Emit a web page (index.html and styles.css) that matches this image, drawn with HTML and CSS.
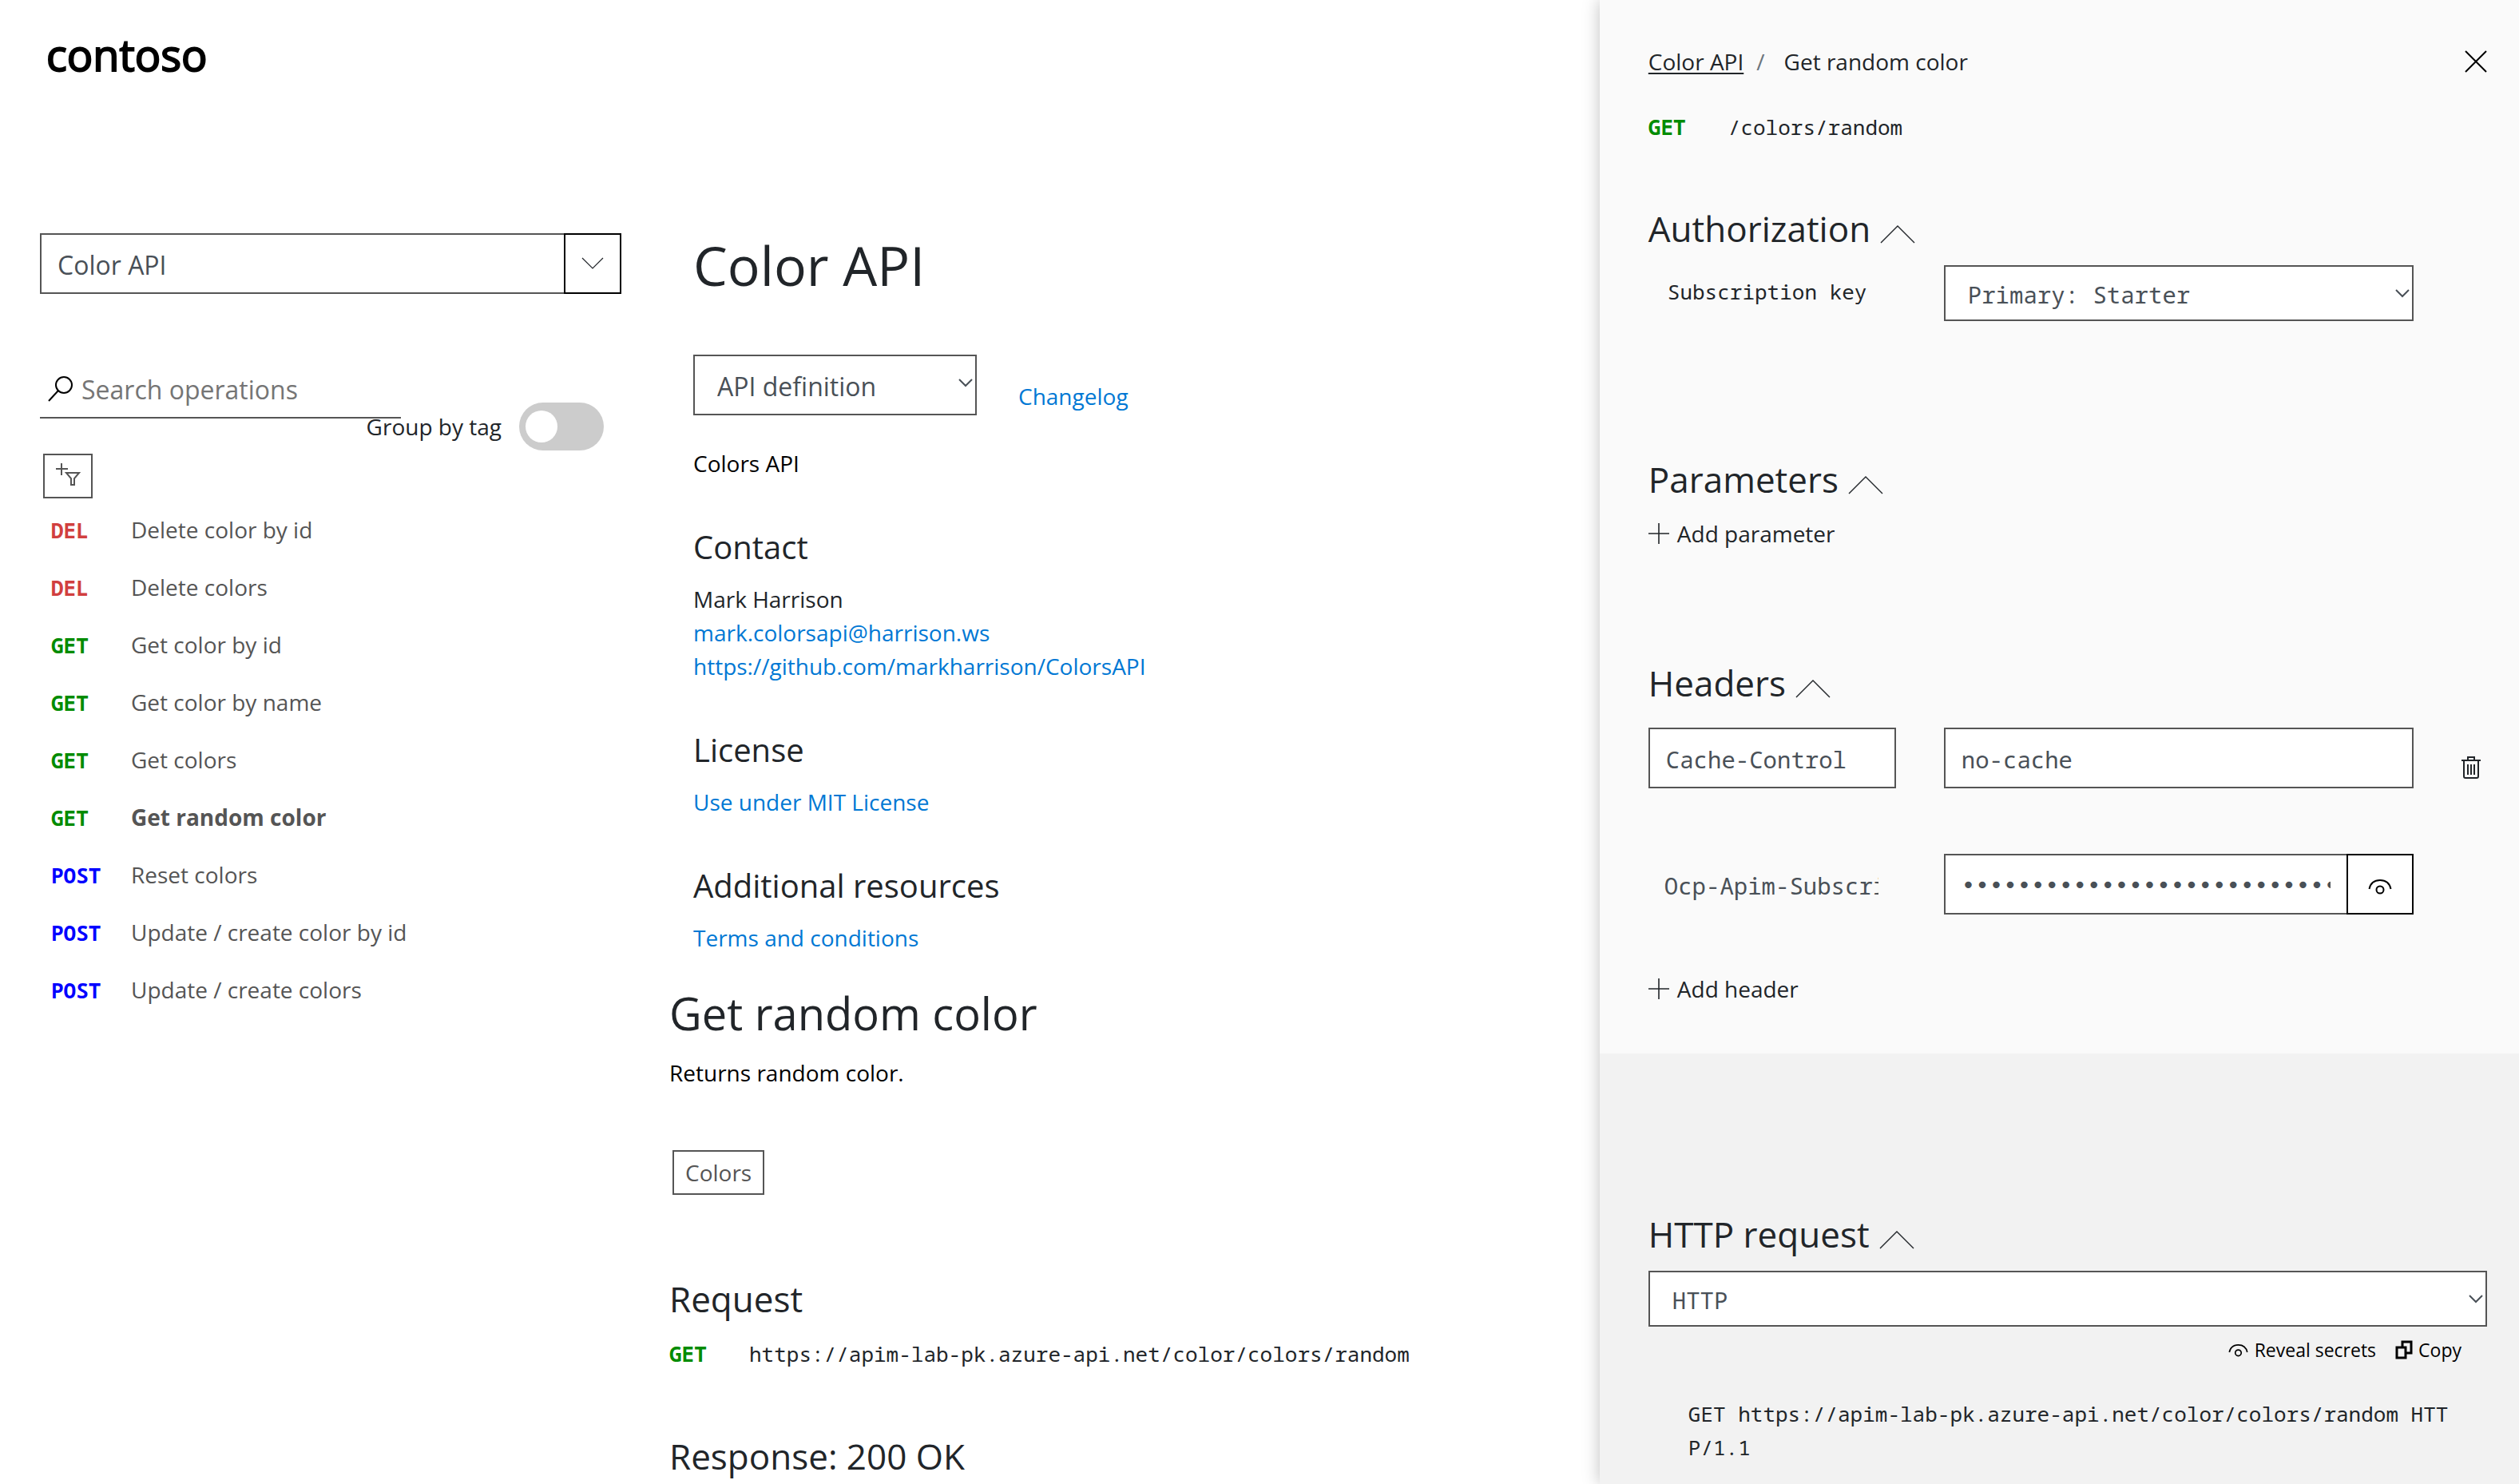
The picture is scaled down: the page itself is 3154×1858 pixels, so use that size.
FILE: index.html
```html
<!DOCTYPE html>
<html lang="en">
<head>
<meta charset="utf-8">
<meta name="viewport" content="width=device-width, initial-scale=1">
<title>Color API - Get random color</title>
<link rel="stylesheet" href="styles.css">
</head>
<body>
<svg class="defs" aria-hidden="true">
  <symbol id="icon-up" viewBox="0 0 44 23"><path d="M1 22 22 1l21 21" fill="none" stroke="currentColor" stroke-width="1.400"/></symbol>
  <symbol id="icon-arrow" viewBox="0 0 18 11"><path d="m1 1 8 8 8-8" fill="none" stroke="currentColor" stroke-width="2"/></symbol>
  <symbol id="icon-plus" viewBox="0 0 26 26"><path d="M13 0v26M0 13h26" fill="none" stroke="currentColor" stroke-width="1.600"/></symbol>
  <symbol id="icon-eye" viewBox="0 0 30 20"><path d="M1.500 13C3 6 8 2 15 2s12 4 13.500 11" fill="none" stroke="currentColor" stroke-width="2"/><circle cx="15" cy="14" r="4.500" fill="none" stroke="currentColor" stroke-width="2"/></symbol>
</svg>
<div class="page">
  <div class="portal">
    <header class="header"><a class="logo" href="#">contoso</a></header>
    <div class="columns">
      <nav class="sidebar" aria-label="Operations">
        <div class="combo">
          <input class="field combo-input" type="text" value="Color API" aria-label="API">
          <button class="combo-button" type="button" aria-label="Show APIs">
            <svg width="28" height="16" viewBox="0 0 28 16"><path d="m1 1 13 13L27 1" fill="none" stroke="#212529" stroke-width="1.200"/></svg>
          </button>
        </div>
        <div class="search">
          <svg width="32" height="32" viewBox="0 0 32 32"><circle cx="20" cy="11" r="10" fill="none" stroke="#000" stroke-width="2"/><path d="M13 18 1 31" stroke="#000" stroke-width="2"/></svg>
          <input class="search-input" type="search" placeholder="Search operations" aria-label="Search operations">
        </div>
        <div class="group">
          <label for="group-by-tag">Group by tag</label>
          <input class="switch" id="group-by-tag" type="checkbox">
        </div>
        <button class="filter" type="button" aria-label="Add tag filter">
          <svg width="32" height="32" viewBox="0 0 32 32" fill="none" stroke="#555" stroke-width="2"><path d="M8 0v15M1 7h15"/><path d="M14 12h16l-6 7v8h-4v-8z"/></svg>
        </button>
        <ul class="operations">
          <li><a href="#"><span class="method del">DEL</span><span>Delete color by id</span></a></li>
          <li><a href="#"><span class="method del">DEL</span><span>Delete colors</span></a></li>
          <li><a href="#"><span class="method get">GET</span><span>Get color by id</span></a></li>
          <li><a href="#"><span class="method get">GET</span><span>Get color by name</span></a></li>
          <li><a href="#"><span class="method get">GET</span><span>Get colors</span></a></li>
          <li><a href="#" aria-current="page"><span class="method get">GET</span><span class="current">Get random color</span></a></li>
          <li><a href="#"><span class="method post">POST</span><span>Reset colors</span></a></li>
          <li><a href="#"><span class="method post">POST</span><span>Update / create color by id</span></a></li>
          <li><a href="#"><span class="method post">POST</span><span>Update / create colors</span></a></li>
        </ul>
      </nav>
      <main class="main">
        <div class="api">
          <h1>Color API</h1>
          <div class="api-tools">
            <div class="select definition">
              <select class="field" aria-label="API definition"><option>API definition</option></select>
              <svg width="18" height="11"><use href="#icon-arrow"/></svg>
            </div>
            <a class="link" href="#">Changelog</a>
          </div>
          <p class="description">Colors API</p>
          <section class="info">
            <h3>Contact</h3>
            <p>Mark Harrison</p>
            <p><a class="link" href="#">mark.colorsapi@harrison.ws</a></p>
            <p><a class="link" href="#">https://github.com/markharrison/ColorsAPI</a></p>
          </section>
          <section class="info">
            <h3>License</h3>
            <p><a class="link" href="#">Use under MIT License</a></p>
          </section>
          <section class="info">
            <h3>Additional resources</h3>
            <p><a class="link" href="#">Terms and conditions</a></p>
          </section>
        </div>
        <section class="operation">
          <h2>Get random color</h2>
          <p class="returns">Returns random color.</p>
          <span class="tag">Colors</span>
          <h4 class="request">Request</h4>
          <p class="endpoint"><span class="method get">GET</span><span>https://apim-lab-pk.azure-api.net/color/colors/random</span></p>
          <h4 class="response">Response: 200 OK</h4>
        </section>
      </main>
    </div>
  </div>
  <aside class="console" aria-label="Try this operation">
    <div class="form">
      <div class="topbar">
        <nav class="breadcrumb" aria-label="Breadcrumb"><a href="#">Color API</a><span class="slash">/</span><span>Get random color</span></nav>
        <button class="plain" type="button" aria-label="Close">
          <svg width="28" height="28" viewBox="0 0 28 28"><path d="m1 1 26 26M27 1 1 27" stroke="#000" stroke-width="2"/></svg>
        </button>
      </div>
      <p class="endpoint path"><span class="method get">GET</span><span>/colors/random</span></p>

      <section class="authorization">
        <h4>Authorization<svg class="up" width="44" height="23"><use href="#icon-up"/></svg></h4>
        <div class="row">
          <label class="row-label" for="key">Subscription key</label>
          <div class="select mono">
            <select class="field" id="key"><option>Primary: Starter</option></select>
            <svg width="18" height="11"><use href="#icon-arrow"/></svg>
          </div>
        </div>
      </section>

      <section class="parameters">
        <h4>Parameters<svg class="up" width="44" height="23"><use href="#icon-up"/></svg></h4>
        <button class="plain add" type="button"><svg width="26" height="26"><use href="#icon-plus"/></svg>Add parameter</button>
      </section>

      <section class="headers">
        <h4>Headers<svg class="up" width="44" height="23"><use href="#icon-up"/></svg></h4>
        <div class="row">
          <input class="field mono" type="text" value="Cache-Control" aria-label="Header name">
          <input class="field mono" type="text" value="no-cache" aria-label="Header value">
          <button class="plain remove" type="button" aria-label="Remove header">
            <svg width="24" height="28" viewBox="0 0 24 28" fill="none" stroke="#212529" stroke-width="2"><path d="M0 5h24M8 5V1h8v4M3 5v20q0 2 2 2h14q2 0 2-2V5M8 10v13M12 10v13M16 10v13"/></svg>
          </button>
        </div>
        <div class="row">
          <input class="field mono bare" type="text" value="Ocp-Apim-Subscription-Key" readonly aria-label="Header name">
          <div class="secret">
            <input class="field mono" type="password" value="00000000000000000000000000000000" aria-label="Header value">
            <button class="reveal" type="button" aria-label="Reveal value"><svg width="30" height="20"><use href="#icon-eye"/></svg></button>
          </div>
        </div>
        <button class="plain add" type="button"><svg width="26" height="26"><use href="#icon-plus"/></svg>Add header</button>
      </section>
    </div>

    <section class="sample">
      <h4>HTTP request<svg class="up" width="44" height="23"><use href="#icon-up"/></svg></h4>
      <div class="select mono">
        <select class="field" aria-label="Language"><option>HTTP</option></select>
        <svg width="18" height="11"><use href="#icon-arrow"/></svg>
      </div>
      <div class="actions">
        <button class="plain" type="button"><svg width="25" height="17"><use href="#icon-eye"/></svg>Reveal secrets</button>
        <button class="plain copy" type="button"><svg width="22" height="24" viewBox="0 0 22 24" fill="none" stroke="#000" stroke-width="3"><path d="M2 9h11v13H2zM9 8V2h11v14h-6"/></svg>Copy</button>
      </div>
      <pre class="code">GET https://apim-lab-pk.azure-api.net/color/colors/random HTTP/1.1</pre>
    </section>
  </aside>
</div>
</body>
</html>
```
FILE: styles.css
```css
* {
  box-sizing: border-box;
}

body {
  margin: 0;
  background: #fff;
  color: #212529;
  font: 28px/42px "Open Sans", sans-serif;
}

h1, h2, h3, h4, p, ul, pre {
  margin: 0;
  padding: 0;
  font-weight: 400;
}

svg {
  display: block;
  flex: none;
}

button, input, select {
  margin: 0;
  border-radius: 0;
  font: inherit;
}

.defs {
  position: absolute;
  width: 0;
  height: 0;
}

h1 {
  font-size: 68px;
  line-height: 80px;
}

h2 {
  font-size: 56px;
  line-height: 68px;
}

h3 {
  font-size: 40px;
  line-height: 48px;
}

h4 {
  display: flex;
  align-items: center;
  gap: 12px;
  font-size: 44px;
  line-height: 52px;
}

.up {
  margin-top: 14px;
}

.page {
  display: grid;
  grid-template-columns: minmax(0, 1fr) 36.5%;
  min-height: 100vh;
}

/* Shared controls */

.field {
  width: 100%;
  height: 76px;
  padding: 2px 20px 0;
  border: 2px solid #555;
  background: #fff;
  color: #495057;
  font-size: 32px;
}

.mono,
.mono .field {
  font-family: "Noto Sans Mono", "DejaVu Sans Mono", monospace;
  font-size: 29px;
}

.field.mono {
  padding-top: 2px;
}

.select {
  position: relative;
}

.select .field {
  appearance: none;
  padding: 4px 28px 0;
}

.select.mono .field {
  height: 70px;
}

.select svg {
  position: absolute;
  top: 30px;
  right: 5px;
  color: #495057;
  pointer-events: none;
}

.plain {
  display: flex;
  align-items: center;
  padding: 0;
  border: 0;
  background: none;
  color: inherit;
}

.link {
  color: #0078d4;
  text-decoration: none;
}

.method {
  font-family: "Noto Sans Mono", "DejaVu Sans Mono", monospace;
  font-size: 26px;
  font-weight: 700;
}

.del {
  color: #d13f3f;
}

.get {
  color: #008b00;
}

.post {
  color: #00f;
}

.endpoint {
  display: grid;
  grid-template-columns: 100px 1fr;
  font-family: "Noto Sans Mono", "DejaVu Sans Mono", monospace;
  font-size: 26px;
}

/* Portal */

.header {
  padding: 38px 58px 194px;
}

.logo {
  display: block;
  color: #000;
  font-size: 54px;
  line-height: 60px;
  text-decoration: none;
  -webkit-text-stroke: 2px #000;
}

.columns {
  display: flex;
  gap: 60px;
  padding-left: 50px;
}

.sidebar {
  flex: 0 0 728px;
}

.combo {
  display: flex;
}

.combo-input {
  flex: 1;
  border-right: 0;
}

.combo-button {
  display: grid;
  place-items: center;
  width: 72px;
  border: 2px solid #000;
  background: #fff;
}

.search {
  display: flex;
  align-items: center;
  gap: 10px;
  width: 452px;
  height: 72px;
  margin-top: 84px;
  padding-left: 10px;
  border-bottom: 2px solid #555;
}

.search-input {
  width: 100%;
  padding: 2px 0 0;
  border: 0;
  background: none;
  font-size: 32px;
}

.search-input::placeholder {
  color: #757575;
}

.group {
  display: flex;
  align-items: center;
  justify-content: flex-end;
  gap: 22px;
  margin-top: -20px;
  padding-right: 22px;
}

.switch {
  display: flex;
  align-items: center;
  appearance: none;
  width: 106px;
  height: 60px;
  padding: 0 8px;
  border-radius: 30px;
  background: #ccc;
}

.switch::before {
  content: "";
  width: 40px;
  height: 40px;
  border-radius: 50%;
  background: #fff;
}

.filter {
  display: grid;
  place-items: center;
  width: 62px;
  height: 56px;
  margin: 4px 0 3px 4px;
  padding: 0;
  border: 2px solid #555;
  background: #fff;
}

.operations {
  list-style: none;
}

.operations a {
  display: grid;
  grid-template-columns: 100px 1fr;
  align-items: baseline;
  padding: 15px 14px;
  color: #555;
  text-decoration: none;
}

.operations .method {
  line-height: 30px;
}

.current {
  font-weight: 700;
}

.main {
  flex: 1;
  min-width: 0;
}

.api {
  padding-left: 30px;
}

.api-tools {
  display: flex;
  align-items: flex-end;
  gap: 52px;
  margin-top: 72px;
}

.api-tools .link {
  padding-bottom: 3px;
}

.definition {
  width: 355px;
}

.description {
  margin-top: 39px;
  color: #000;
}

.info {
  margin-top: 60px;
}

.info h3 {
  margin-bottom: 20px;
}

.operation {
  margin-top: 39px;
}

.returns {
  margin-top: 20px;
  color: #000;
}

.tag {
  display: block;
  width: fit-content;
  margin: 76px 0 104px 4px;
  padding: 5px 14px;
  border: 2px solid #555;
  color: #555;
}

.request {
  margin-bottom: 22px;
}

.response {
  margin-top: 81px;
}

/* Test console */

.console {
  display: flex;
  flex-direction: column;
  background: #fafafa;
  box-shadow: 0 0 20px rgba(0, 0, 0, 0.25);
}

.form {
  padding: 56px 40px 60px 61px;
}

.topbar {
  display: flex;
  justify-content: space-between;
}

.breadcrumb {
  display: flex;
}

.breadcrumb a {
  color: inherit;
  text-underline-offset: 3px;
}

.slash {
  padding: 0 24px 0 16px;
  color: #6c757d;
}

.path {
  margin-top: 40px;
}

.authorization {
  margin-top: 80px;
}

.row {
  display: grid;
  grid-template-columns: 310px minmax(0, 1fr) 32px;
  column-gap: 60px;
}

.authorization .row {
  align-items: center;
  margin-top: 20px;
}

.row-label {
  padding: 0 0 4px 24px;
  font-family: "Noto Sans Mono", "DejaVu Sans Mono", monospace;
  font-size: 26px;
  line-height: 38px;
}

.parameters {
  margin-top: 172px;
}

.add {
  gap: 10px;
}

.parameters .add {
  margin-top: 21px;
}

.headers {
  margin-top: 140px;
}

.headers .row {
  margin: 30px 0 82px;
}

.headers .row + .row {
  margin: 0 0 72px;
}

.remove {
  align-self: end;
  padding-bottom: 12px;
}

.field.bare {
  padding-left: 18px;
  border-color: transparent;
  background: none;
}

.secret {
  display: flex;
}

.reveal {
  display: grid;
  place-items: center;
  flex: none;
  width: 84px;
  padding: 6px 0 0;
  border: 2px solid #000;
  background: #fff;
  color: #000;
}

.secret .field {
  border-right: 0;
  font-family: "DejaVu Sans Mono", monospace;
}

.sample {
  flex: 1;
  padding: 200px 40px 20px 61px;
  background: #f2f2f2;
}

.sample .select {
  margin-top: 20px;
}

.actions {
  display: flex;
  justify-content: flex-end;
  gap: 24px;
  margin-top: 11px;
  padding-right: 32px;
  color: #000;
  font-size: 23px;
  line-height: 36px;
}

.actions .plain {
  gap: 8px;
}

.actions .copy {
  gap: 7px;
}

.code {
  margin: 41px 38px 0 50px;
  font-family: "Noto Sans Mono", "DejaVu Sans Mono", monospace;
  font-size: 26px;
  white-space: pre-wrap;
  word-break: break-all;
}
```
